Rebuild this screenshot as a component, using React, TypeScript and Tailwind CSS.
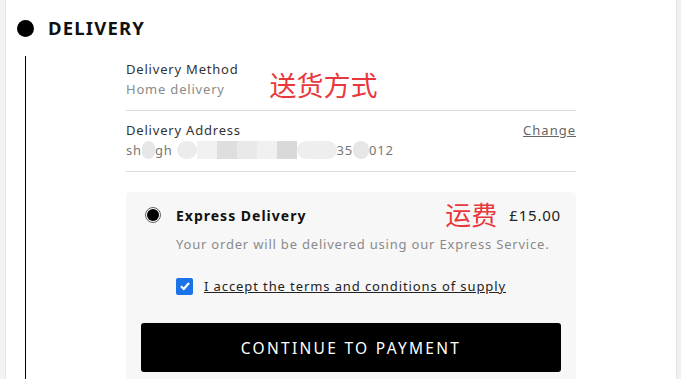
import React from 'react';

const font = { fontFamily: '"Noto Sans", "Noto Sans CJK SC", sans-serif' };

const Blob = ({ w, c, round }: { w: number; c: string; round?: boolean }) => (
  <span
    className={`inline-block h-[18px] align-middle ${round ? 'rounded-full' : ''}`}
    style={{ width: w, background: c }}
  />
);

const App: React.FC = () => {
  return (
    <div className="h-[379px] w-[681px] bg-white flex overflow-hidden text-[#222] tracking-[0.8px]" style={font}>
      <div className="w-[6px] shrink-0 bg-[#f3f3f3] border-r border-[#e6e6e6]" />
      <div className="flex-1 flex flex-col">
        {/* step header */}
        <div className="flex shrink-0 items-center h-[56px] pl-[11px]">
          <div className="w-[17px] h-[17px] rounded-full bg-black" />
          <h2 className="ml-[14px] text-[18.5px] font-bold tracking-[1.2px] text-[#111]">DELIVERY</h2>
        </div>
        <div className="flex flex-1 min-h-0">
          <div className="w-[20px] shrink-0 border-r border-black" />
          <div className="flex-1 pl-[100px] pr-[100px]">
            {/* method */}
            <div className="flex items-start h-[55px] border-b border-[#dcdcdc] pt-[3px]">
              <div className="flex flex-col leading-[20px] text-[13px]">
                <span className="text-[#333]">Delivery Method</span>
                <span className="text-[#8a8a8a]">Home delivery</span>
              </div>
              <span className="ml-[31px] mt-[12px] text-[27px] leading-[30px] tracking-normal text-[#e8383d]">送货方式</span>
            </div>
            {/* address */}
            <div className="flex justify-between h-[61px] border-b border-[#dcdcdc] pt-[9px]">
              <div className="flex flex-col leading-[20px] text-[13px]">
                <span className="text-[#333]">Delivery Address</span>
                <span className="text-[#777] flex items-center">
                  sh<Blob w={13} c="#e6e6e6" round />gh
                  <span className="ml-[4px] inline-flex">
                    <Blob w={20} c="#ececec" round />
                    <Blob w={20} c="#f1f1f1" />
                    <Blob w={20} c="#dedede" />
                    <Blob w={20} c="#e9e9e9" />
                    <Blob w={20} c="#f0f0f0" />
                    <Blob w={20} c="#d9d9d9" />
                    <Blob w={40} c="#eeeeee" round />
                  </span>
                  35<Blob w={16} c="#e6e6e6" round />012
                </span>
              </div>
              <a className="text-[13px] text-[#666] underline leading-[20px] tracking-[1px]">Change</a>
            </div>
            {/* option card */}
            <div className="mt-[20px] bg-[#f7f7f7] rounded-[4px] pl-[19px] pr-[15px] pt-[10px] h-[220px]">
              <div className="flex items-center h-[26px]">
                <div className="w-[16px] h-[16px] rounded-full border border-[#666] flex items-center justify-center">
                  <div className="w-[12px] h-[12px] rounded-full bg-black" />
                </div>
                <span className="ml-[15px] text-[14px] font-bold tracking-[1px] text-[#111]">Express Delivery</span>
                <span className="ml-auto text-[26px] leading-[28px] tracking-normal text-[#e8383d]">运费</span>
                <span className="ml-[12px] text-[15px] tracking-[0.8px] text-[#222]">£15.00</span>
              </div>
              <p className="ml-[31px] mt-[7px] text-[13px] text-[#8a8a8a]">
                Your order will be delivered using our Express Service.
              </p>
              <div className="ml-[31px] mt-[22px] flex items-center">
                <div className="w-[17px] h-[17px] rounded-[2px] bg-[#1a73e8] flex items-center justify-center">
                  <svg width="12" height="12" viewBox="0 0 12 12">
                    <path d="M2 6.2 L4.8 9 L10 3" stroke="white" strokeWidth="2.2" fill="none" />
                  </svg>
                </div>
                <span className="ml-[11px] text-[13px] text-[#222] underline tracking-[0.9px]">
                  I accept the terms and conditions of supply
                </span>
              </div>
              <div className="-ml-[4px]">
                <button className="mt-[27px] w-full h-[49px] bg-black rounded-[3px] text-white text-[15.5px] tracking-[2.3px] leading-[46px]">
                  CONTINUE TO PAYMENT
                </button>
              </div>
            </div>
          </div>
        </div>
      </div>
      <div className="w-[5px] shrink-0 bg-[#f0f0f0] border-l border-[#e4e4e4]" />
    </div>
  );
};

export default App;
